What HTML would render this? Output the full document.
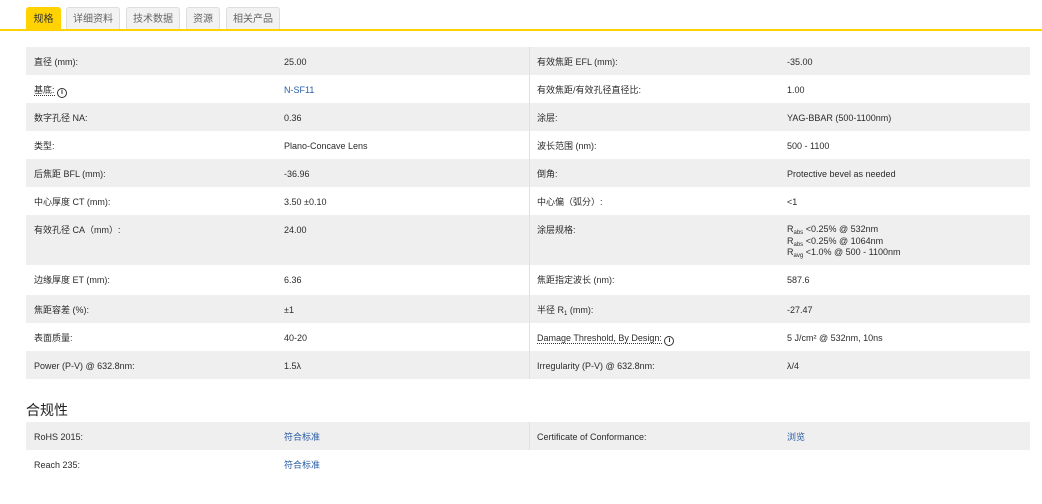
<!DOCTYPE html>
<html><head><meta charset="utf-8"><style>
body{margin:0;width:1042px;height:504px;background:#fff;font-family:"Liberation Sans","Noto Sans CJK SC",sans-serif;color:#333;position:relative;overflow:hidden}
.tab{position:absolute;top:7px;height:23px;line-height:24px;font-size:10px;text-align:center;color:#666;background:#f2f2f2;border:1px solid #ddd;border-bottom:none;box-sizing:border-box;border-radius:3px 3px 0 0}
.tab.a{background:#ffd200;border-color:#ffd200;color:#333}
.line{position:absolute;left:0;top:29px;width:1042px;height:2px;background:#ffd200}
.r{position:absolute;left:26px;width:1004px;font-size:9px;color:#2b2b2b}
.r.s{background:#efefef}
.r>span{position:absolute;top:10px;line-height:11px;white-space:nowrap}
.r .sep{position:absolute;left:503px;top:0;bottom:0;width:1px;background:#e0e0e0}
.l1{left:8px}.v1{left:258px}.l2{left:511px}.v2{left:761px}
.b{color:#2a5da8}
sub{font-size:6px;vertical-align:-2px;line-height:0}
.i{display:inline-block;width:8px;height:8px;border:1.3px solid #333;border-radius:50%;font-size:7px;line-height:8px;text-align:center;font-weight:bold;vertical-align:-1px;font-style:normal}
.u{border-bottom:1px dotted #333}
h3{position:absolute;left:26px;top:400px;margin:0;font-size:14px;font-weight:normal;color:#222}
</style></head><body>
<div class="tab a" style="left:26px;width:35px">规格</div>
<div class="tab" style="left:66px;width:54px">详细资料</div>
<div class="tab" style="left:126px;width:54px">技术数据</div>
<div class="tab" style="left:186px;width:34px">资源</div>
<div class="tab" style="left:226px;width:54px">相关产品</div>
<div class="line"></div>

<div class="r s" style="top:47px;height:28px"><i class="sep"></i><span class="l1">直径 (mm):</span><span class="v1">25.00</span><span class="l2">有效焦距 EFL (mm):</span><span class="v2">-35.00</span></div>
<div class="r" style="top:75px;height:28px"><i class="sep"></i><span class="l1"><u class="u" style="text-decoration:none">基底:</u> <b class="i">i</b></span><span class="v1 b">N-SF11</span><span class="l2">有效焦距/有效孔径直径比:</span><span class="v2">1.00</span></div>
<div class="r s" style="top:103px;height:28px"><i class="sep"></i><span class="l1">数字孔径 NA:</span><span class="v1">0.36</span><span class="l2">涂层:</span><span class="v2">YAG-BBAR (500-1100nm)</span></div>
<div class="r" style="top:131px;height:28px"><i class="sep"></i><span class="l1">类型:</span><span class="v1">Plano-Concave Lens</span><span class="l2">波长范围 (nm):</span><span class="v2">500 - 1100</span></div>
<div class="r s" style="top:159px;height:28px"><i class="sep"></i><span class="l1">后焦距 BFL (mm):</span><span class="v1">-36.96</span><span class="l2">倒角:</span><span class="v2">Protective bevel as needed</span></div>
<div class="r" style="top:187px;height:28px"><i class="sep"></i><span class="l1">中心厚度 CT (mm):</span><span class="v1">3.50 ±0.10</span><span class="l2">中心偏（弧分）:</span><span class="v2">&lt;1</span></div>
<div class="r s" style="top:215px;height:50px"><i class="sep"></i><span class="l1">有效孔径 CA（mm）:</span><span class="v1">24.00</span><span class="l2">涂层规格:</span><span class="v2" style="top:9px;line-height:11.5px">R<sub>abs</sub> &lt;0.25% @ 532nm<br>R<sub>abs</sub> &lt;0.25% @ 1064nm<br>R<sub>avg</sub> &lt;1.0% @ 500 - 1100nm</span></div>
<div class="r" style="top:265px;height:30px"><i class="sep"></i><span class="l1">边缘厚度 ET (mm):</span><span class="v1">6.36</span><span class="l2">焦距指定波长 (nm):</span><span class="v2">587.6</span></div>
<div class="r s" style="top:295px;height:28px"><i class="sep"></i><span class="l1">焦距容差 (%):</span><span class="v1">±1</span><span class="l2">半径 R<sub>1</sub> (mm):</span><span class="v2">-27.47</span></div>
<div class="r" style="top:323px;height:28px"><i class="sep"></i><span class="l1">表面质量:</span><span class="v1">40-20</span><span class="l2"><u class="u" style="text-decoration:none">Damage Threshold, By Design:</u> <b class="i">i</b></span><span class="v2">5 J/cm² @ 532nm, 10ns</span></div>
<div class="r s" style="top:351px;height:28px"><i class="sep"></i><span class="l1">Power (P-V) @ 632.8nm:</span><span class="v1">1.5λ</span><span class="l2">Irregularity (P-V) @ 632.8nm:</span><span class="v2">λ/4</span></div>

<h3>合规性</h3>
<div class="r s" style="top:422px;height:28px"><i class="sep"></i><span class="l1">RoHS 2015:</span><span class="v1 b">符合标准</span><span class="l2">Certificate of Conformance:</span><span class="v2 b">浏览</span></div>
<div class="r" style="top:450px;height:28px"><span class="l1">Reach 235:</span><span class="v1 b">符合标准</span></div>
</body></html>
